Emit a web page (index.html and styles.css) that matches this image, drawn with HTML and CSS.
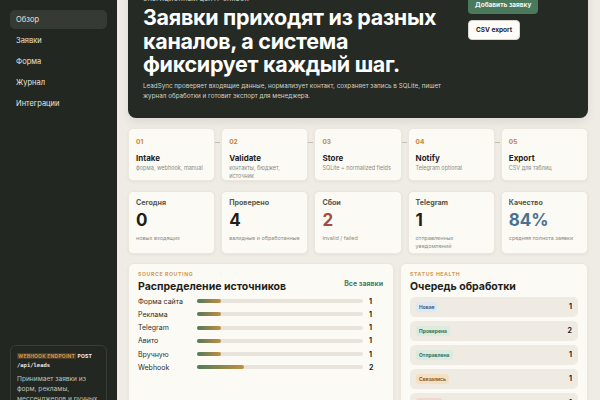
FILE: index.html
```html
<!DOCTYPE html>
<html lang="ru">
<head>
    <meta charset="UTF-8">
    <meta name="viewport" content="width=device-width, initial-scale=1.0">
    <title>LeadSync — обзор</title>
    <link rel="stylesheet" href="styles.css">
</head>
<body>
    <aside class="sidebar">
        <nav class="nav">
            <a class="nav-item active" href="#">Обзор</a>
            <a class="nav-item" href="#">Заявки</a>
            <a class="nav-item" href="#">Форма</a>
            <a class="nav-item" href="#">Журнал</a>
            <a class="nav-item" href="#">Интеграции</a>
        </nav>

        <div class="endpoint">
            <div class="endpoint-head">
                <span class="endpoint-label">Webhook endpoint</span>
                <span class="endpoint-method">POST</span>
            </div>
            <code class="endpoint-path">/api/leads</code>
            <p class="endpoint-text">Принимает заявки из форм, рекламы, мессенджеров и ручных вводов в одном формате.</p>
        </div>
    </aside>

    <main class="main">
        <section class="hero">
            <div class="hero-text">
                <div class="eyebrow">Операционный центр заявок</div>
                <h1>Заявки приходят из разных каналов, а система фиксирует каждый шаг.</h1>
                <p>LeadSync проверяет входящие данные, нормализует контакт, сохраняет запись в SQLite, пишет журнал обработки и готовит экспорт для менеджера.</p>
            </div>
            <div class="hero-actions">
                <button class="btn btn-primary">Добавить заявку</button>
                <button class="btn btn-light">CSV export</button>
            </div>
        </section>

        <section class="steps">
            <div class="step">
                <div class="step-num">01</div>
                <div class="step-title">Intake</div>
                <div class="step-sub">форма, webhook, manual</div>
            </div>
            <div class="step">
                <div class="step-num">02</div>
                <div class="step-title">Validate</div>
                <div class="step-sub">контакты, бюджет, источник</div>
            </div>
            <div class="step">
                <div class="step-num">03</div>
                <div class="step-title">Store</div>
                <div class="step-sub">SQLite + normalized fields</div>
            </div>
            <div class="step">
                <div class="step-num">04</div>
                <div class="step-title">Notify</div>
                <div class="step-sub">Telegram optional</div>
            </div>
            <div class="step">
                <div class="step-num">05</div>
                <div class="step-title">Export</div>
                <div class="step-sub">CSV для таблиц</div>
            </div>
        </section>

        <section class="stats">
            <div class="stat">
                <div class="stat-label">Сегодня</div>
                <div class="stat-value">0</div>
                <div class="stat-sub">новых входящих</div>
            </div>
            <div class="stat">
                <div class="stat-label">Проверено</div>
                <div class="stat-value">4</div>
                <div class="stat-sub">валидные и обработанные</div>
            </div>
            <div class="stat">
                <div class="stat-label">Сбои</div>
                <div class="stat-value danger">2</div>
                <div class="stat-sub">invalid / failed</div>
            </div>
            <div class="stat">
                <div class="stat-label">Telegram</div>
                <div class="stat-value">1</div>
                <div class="stat-sub">отправленных уведомлений</div>
            </div>
            <div class="stat">
                <div class="stat-label">Качество</div>
                <div class="stat-value info">84%</div>
                <div class="stat-sub">средняя полнота заявки</div>
            </div>
        </section>

        <section class="panels">
            <div class="panel">
                <div class="panel-head">
                    <div>
                        <div class="panel-eyebrow">Source routing</div>
                        <h2>Распределение источников</h2>
                    </div>
                    <a class="panel-link" href="#">Все заявки</a>
                </div>
                <div class="sources">
                    <div class="source">
                        <span class="source-name">Форма сайта</span>
                        <div class="track"><div class="fill" style="width: 14.3%"></div></div>
                        <span class="source-count">1</span>
                    </div>
                    <div class="source">
                        <span class="source-name">Реклама</span>
                        <div class="track"><div class="fill" style="width: 14.3%"></div></div>
                        <span class="source-count">1</span>
                    </div>
                    <div class="source">
                        <span class="source-name">Telegram</span>
                        <div class="track"><div class="fill" style="width: 14.3%"></div></div>
                        <span class="source-count">1</span>
                    </div>
                    <div class="source">
                        <span class="source-name">Авито</span>
                        <div class="track"><div class="fill" style="width: 14.3%"></div></div>
                        <span class="source-count">1</span>
                    </div>
                    <div class="source">
                        <span class="source-name">Вручную</span>
                        <div class="track"><div class="fill" style="width: 14.3%"></div></div>
                        <span class="source-count">1</span>
                    </div>
                    <div class="source">
                        <span class="source-name">Webhook</span>
                        <div class="track"><div class="fill" style="width: 28.6%"></div></div>
                        <span class="source-count">2</span>
                    </div>
                </div>
            </div>

            <div class="panel">
                <div class="panel-eyebrow">Status health</div>
                <h2>Очередь обработки</h2>
                <div class="queue">
                    <div class="queue-row"><span class="badge badge-new">Новая</span><b>1</b></div>
                    <div class="queue-row"><span class="badge badge-ok">Проверена</span><b>2</b></div>
                    <div class="queue-row"><span class="badge badge-ok">Отправлена</span><b>1</b></div>
                    <div class="queue-row"><span class="badge badge-warn">Связались</span><b>1</b></div>
                    <div class="queue-row"><span class="badge badge-bad">Ошибка</span><b>1</b></div>
                </div>
            </div>
        </section>
    </main>

    <script>
        document.querySelector('.main').scrollTop = 29;
    </script>
</body>
</html>
```

FILE: styles.css
```css
* {
    margin: 0;
    padding: 0;
    box-sizing: border-box;
}

body {
    font-family: 'Inter', 'Noto Sans', sans-serif;
    display: grid;
    grid-template-columns: 117px 1fr;
    height: 100vh;
    overflow: hidden;
    background-color: #efece5;
    color: #222420;
}

/* Боковая панель */
.sidebar {
    background-color: #232722;
    padding: 10px;
    display: flex;
    flex-direction: column;
    height: 110.5vh;
}

.nav {
    display: flex;
    flex-direction: column;
    gap: 2px;
}

.nav-item {
    display: block;
    padding: 5px 6px;
    border-radius: 5px;
    font-size: 7.5px;
    color: #e4e5df;
    text-decoration: none;
    line-height: 9px;
}

.nav-item.active {
    background-color: #363a35;
}

.endpoint {
    margin-top: auto;
    border: 1px solid #383c37;
    border-radius: 6px;
    padding: 7px 6px;
}

.endpoint-head {
    font-size: 5px;
    font-weight: 700;
    letter-spacing: 0.2px;
    white-space: nowrap;
}

.endpoint-label {
    text-transform: uppercase;
    color: #d8954a;
    background-color: #4a3a27;
    padding: 0 1px;
}

.endpoint-method {
    color: #f2f2ee;
}

.endpoint-path {
    display: block;
    margin-top: 3px;
    font-family: 'DejaVu Sans Mono', monospace;
    font-size: 5.5px;
    font-weight: 700;
    color: #e8e8e2;
}

.endpoint-text {
    margin-top: 6px;
    font-size: 6.6px;
    line-height: 10px;
    color: #bfc1b9;
}

/* Основная часть */
.main {
    height: 100vh;
    overflow-y: auto;
    padding: 10px 12px 20px 11px;
    scrollbar-width: none;
}

.main::-webkit-scrollbar {
    display: none;
}

.hero {
    background-color: #252a24;
    border-radius: 8px;
    padding: 15px 15px 16px;
    display: grid;
    grid-template-columns: 1fr auto;
    gap: 20px;
    color: #fff;
    box-shadow: 0 4px 10px rgba(0, 0, 0, 0.08);
}

.eyebrow {
    font-size: 5.5px;
    font-weight: 700;
    text-transform: uppercase;
    letter-spacing: 0.5px;
    color: #b8bab2;
}

.hero h1 {
    margin-top: 4px;
    font-size: 21.5px;
    line-height: 23.5px;
    font-weight: 700;
    letter-spacing: -0.3px;
    max-width: 320px;
}

.hero p {
    margin-top: 4px;
    font-size: 6.3px;
    line-height: 10.5px;
    color: #cfd1c9;
    max-width: 312px;
}

.hero-actions {
    display: flex;
    flex-direction: column;
    align-items: flex-start;
    gap: 6px;
    width: 105px;
}

.btn {
    font-family: inherit;
    font-size: 6.5px;
    font-weight: 700;
    border: none;
    border-radius: 4px;
    padding: 5px 7px;
    cursor: pointer;
}

.btn-primary {
    background-color: #4a7a5b;
    color: #f3f6f1;
}

.btn-light {
    background-color: #fdfcf8;
    color: #1f221e;
    padding: 5px 7px 5px;
    border: 1px solid #d8d5cc;
}

/* Конвейер обработки */
.steps {
    margin-top: 10px;
    display: grid;
    grid-template-columns: repeat(5, 1fr);
    gap: 6px;
}

.step,
.stat,
.panel {
    background-color: #fcfaf4;
    border: 1px solid #ebe7de;
    box-shadow: 0 1px 3px rgba(60, 50, 30, 0.06);
}

.step {
    position: relative;
    border-radius: 5px;
    padding: 9px 7px;
    height: 53px;
}

.step:not(:last-child)::after {
    content: '';
    position: absolute;
    top: 13px;
    right: -6px;
    width: 5px;
    height: 1px;
    background-color: #c5bdae;
}

.step-num {
    font-size: 6.5px;
    font-weight: 700;
    color: #c4843a;
}

.step-title {
    margin-top: 7px;
    font-size: 8px;
    font-weight: 700;
    color: #1f221e;
}

.step-sub {
    margin-top: 1px;
    font-size: 5.5px;
    line-height: 8px;
    color: #8a8a83;
}

/* Показатели */
.stats {
    margin-top: 10px;
    display: grid;
    grid-template-columns: repeat(5, 1fr);
    gap: 6px;
}

.stat {
    border-radius: 5px;
    padding: 6px 7px;
    height: 63px;
}

.stat-label {
    font-size: 7.1px;
    font-weight: 700;
    color: #55564f;
}

.stat-value {
    margin-top: 3px;
    font-size: 17px;
    line-height: 20px;
    font-weight: 700;
    color: #1c1e1b;
}

.stat-value.danger {
    color: #a64a3c;
}

.stat-value.info {
    color: #4a7191;
}

.stat-sub {
    margin-top: 4px;
    font-size: 5.4px;
    line-height: 8px;
    color: #8a8a83;
}

/* Панели */
.panels {
    margin-top: 9px;
    display: grid;
    grid-template-columns: 266px 1fr;
    gap: 6px;
}

.panel {
    border-radius: 6px;
    padding: 7px 9px 30px;
}

.panel-head {
    display: flex;
    justify-content: space-between;
    align-items: flex-start;
}

.panel-eyebrow {
    font-size: 5.2px;
    font-weight: 700;
    text-transform: uppercase;
    letter-spacing: 0.6px;
    color: #cf9a5e;
}

.panel h2 {
    margin-top: 3px;
    font-size: 10.5px;
    font-weight: 700;
    color: #1d1f1c;
}

.panel-link {
    margin-top: 8px;
    margin-right: 1px;
    font-size: 7px;
    font-weight: 700;
    color: #4a7a5b;
    text-decoration: none;
}

.sources {
    margin-top: 4px;
    display: flex;
    flex-direction: column;
    gap: 4.3px;
}

.source {
    display: grid;
    grid-template-columns: 53px 1fr 15px;
    gap: 6px;
    align-items: center;
    height: 9px;
}

.source-name {
    font-size: 7px;
    color: #2e302c;
}

.track {
    height: 4px;
    border-radius: 2px;
    background-color: #e8e4dc;
}

.fill {
    height: 100%;
    border-radius: 2px;
    background: linear-gradient(to right, #4f7a5c, #c48e42);
}

.source-count {
    font-size: 7px;
    font-weight: 700;
}

.queue {
    margin-top: 4px;
    display: flex;
    flex-direction: column;
    gap: 4px;
}

.queue-row {
    display: flex;
    justify-content: space-between;
    align-items: center;
    height: 20px;
    padding: 0 6px;
    border-radius: 5px;
    background-color: #efebe3;
}

.queue-row b {
    font-size: 7px;
}

.badge {
    font-size: 5px;
    font-weight: 700;
    padding: 2px 3px;
    border-radius: 3px;
}

.badge-new {
    background-color: #dfe8f2;
    color: #3e5f80;
}

.badge-ok {
    background-color: #dcebdf;
    color: #3f6e4c;
}

.badge-warn {
    background-color: #f5e1c2;
    color: #8a5a24;
}

.badge-bad {
    background-color: #f1d6cf;
    color: #8e3e32;
}
```
